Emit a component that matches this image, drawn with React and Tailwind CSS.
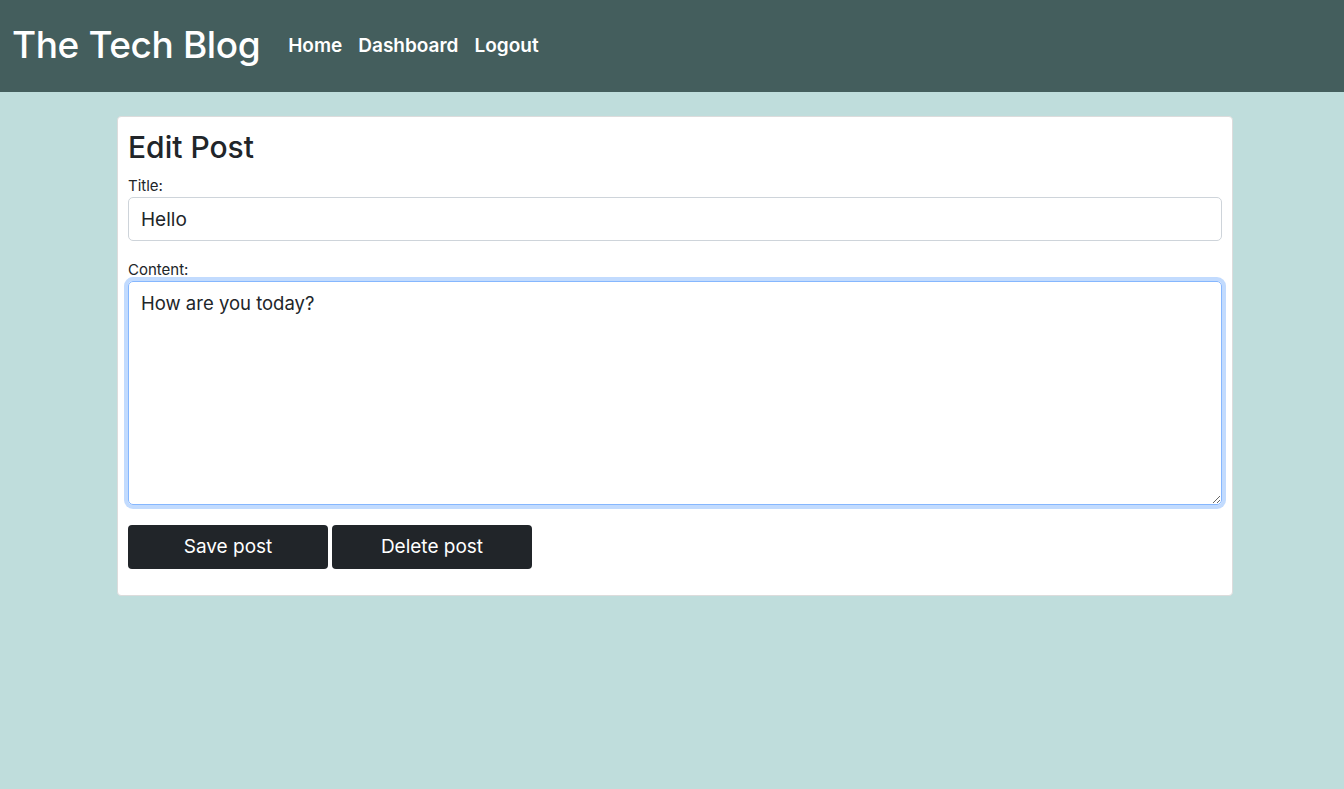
export default function App() {
  const font = { fontFamily: 'Inter, "Liberation Sans", sans-serif' }
  return (
    <div className="min-h-[789px] bg-[#bfdddc] text-[#212529]" style={font}>
      <header className="h-[92px] bg-[#445e5d] flex items-center px-3">
        <h1 className="text-[37px] text-white font-medium tracking-[-0.4px] leading-none pb-1">The Tech Blog</h1>
        <nav className="flex gap-4 ml-7 text-white text-[19px] font-semibold">
          <a href="#">Home</a>
          <a href="#">Dashboard</a>
          <a href="#">Logout</a>
        </nav>
      </header>

      <main className="pt-6 pl-[117px] pr-[111px]">
        <form className="bg-white border border-[#dcdcdc] rounded-[4px] px-[10px] pt-[12px] pb-[26px]">
          <h2 className="text-[30px] font-medium leading-[36px] mb-[11px]">Edit Post</h2>
          <label className="block text-[15px] leading-[20px]">Title:</label>
          <input
            defaultValue="Hello"
            className="block w-full h-[44px] mt-[1px] border border-[#ced4da] rounded-[5px] px-3 text-[19px] outline-none"
          />
          <label className="block text-[15px] leading-[20px] mt-[19px]">Content:</label>
          <textarea
            defaultValue="How are you today?"
            className="block w-full h-[224px] mt-[1px] border border-[#86b7fe] rounded-[5px] px-3 py-[8px] text-[18.5px] outline-none shadow-[0_0_0_4px_rgba(13,110,253,0.25)]"
          />
          <div className="flex gap-1 mt-5">
            <button type="button" className="w-[200px] h-[44px] bg-[#212529] text-white text-[19px] rounded-[4px]">Save post</button>
            <button type="button" className="w-[200px] h-[44px] bg-[#212529] text-white text-[19px] rounded-[4px]">Delete post</button>
          </div>
        </form>
      </main>
    </div>
  )
}
